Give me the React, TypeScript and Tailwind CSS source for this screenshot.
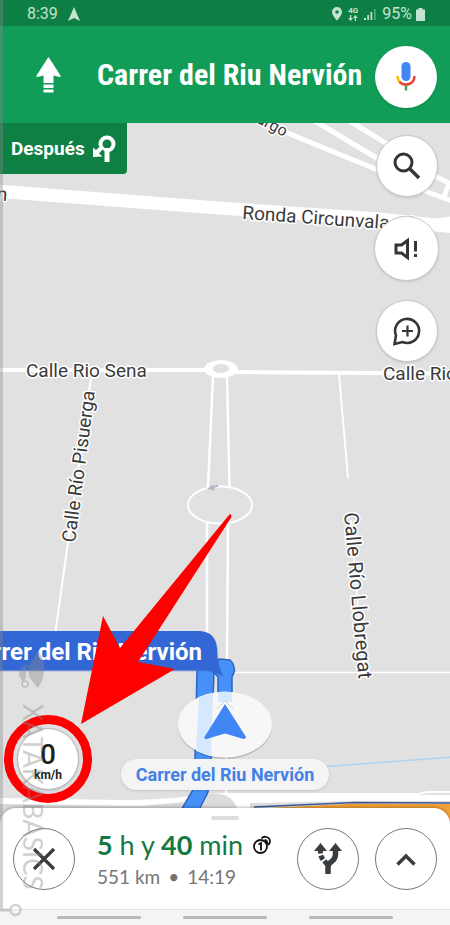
import type { ReactNode } from "react";

const ROBOTO = "font-['Roboto','Liberation_Sans',sans-serif]";
const CONDENSED = "font-['Roboto_Condensed','Liberation_Sans_Narrow','Roboto',sans-serif]";
const ROUND = "font-['Lato','Roboto',sans-serif]";

function StatusBar() {
  return (
    <div className="flex h-[26px] items-center justify-between bg-[#0e7f44] pl-[27px] pr-[25px] text-[#c4e3d1]">
      <div className="flex items-center gap-2.5 pt-0.5">
        <span className="text-[16px] leading-5">8:39</span>
        <svg width="12" height="14" viewBox="0 0 12 14" fill="currentColor" aria-hidden="true">
          <path d="M6 0 12 14 6 11 0 14Z" />
        </svg>
      </div>
      <div className="flex items-center gap-1.5 pt-0.5">
        <svg width="10" height="14" viewBox="0 0 10 14" aria-hidden="true">
          <path fill="currentColor" fillRule="evenodd" d="M5 0a5 5 0 0 1 5 5c0 3.500-5 8.500-5 8.500S0 8.500 0 5a5 5 0 0 1 5-5Zm0 3.200a1.800 1.800 0 1 0 0 3.600 1.800 1.800 0 0 0 0-3.600Z" />
        </svg>
        <div className="flex flex-col items-center">
          <span className="text-[8px] font-bold leading-[8px]">4G</span>
          <svg width="10" height="6" viewBox="0 0 10 6" fill="currentColor" aria-hidden="true">
            <path d="M2 0h1.200v3H5L2.600 6 .2 3H2ZM6.800 6H8V3h1.800L7.400 0 5 3h1.800Z" />
          </svg>
        </div>
        <svg width="12" height="13" viewBox="0 0 12 13" fill="currentColor" aria-hidden="true">
          <path d="M0 10h2v2H0ZM3.300 7h1.700v5H3.300ZM6.500 4h1.700v8H6.500Z" />
          <path opacity=".4" d="M10 1h1.700v11H10Z" />
        </svg>
        <div className="flex items-center gap-1">
          <span className="text-[16px] leading-5">95%</span>
          <svg width="9" height="13" viewBox="0 0 9 13" fill="currentColor" aria-hidden="true">
            <path d="M2.500 0h4v1.500H9V13H0V1.500h2.500Z" />
          </svg>
        </div>
      </div>
    </div>
  );
}

function Header() {
  return (
    <header className="flex h-[97px] items-center bg-[#119d58] pl-9 pr-[13px] text-white">
      <svg className="mr-9 shrink-0" width="25" height="36" viewBox="0 0 25 36" fill="currentColor" aria-hidden="true">
        <path d="M12.500 0 24.500 18.500q.5 1.500-1 1.500l-6-1.500V26h-10v-7.500L1.500 20q-1.500 0-1-1.500ZM7.500 27.500h10V31h-10ZM7.500 32.500h10V35.500h-10Z" />
      </svg>
      <h1 className={`min-w-0 grow whitespace-nowrap text-[30px] font-bold leading-10 ${CONDENSED}`}>Carrer del Riu Nervión</h1>
      <button aria-label="Buscar por voz" className="mt-1 flex size-[62px] shrink-0 items-center justify-center rounded-full bg-white shadow">
        <svg width="20" height="29" viewBox="0 0 20 29" fill="none" aria-hidden="true">
          <rect x="5.500" y="0" width="9" height="19" rx="4.500" fill="#4285f4" />
          <path d="M1.500 14q0 4 2.500 6.500" stroke="#fbbc05" strokeWidth="2.500" />
          <path d="M3.500 19.800Q6 22.500 10 22.500t6.500-2.700Q18.500 17.500 18.500 14" stroke="#ea4335" strokeWidth="2.500" />
          <path d="M10 23.500V28.500" stroke="#34a853" strokeWidth="2.500" />
        </svg>
      </button>
    </header>
  );
}

function MapCanvas() {
  return (
    <svg className="absolute inset-0 size-full" viewBox="0 123 450 701" preserveAspectRatio="xMidYMid slice" aria-label="Mapa">
      <rect x="-400" y="0" width="1300" height="1300" fill="#e1e1e1" />
      <g fill="none" stroke="#fff">
        <path d="M-5 191 225 208.500 380 219 455 227" strokeWidth="13" />
        <path d="M285 132 373 168 430 193 455 202" strokeWidth="5" />
        <path d="M315 121 375 157 425 187" strokeWidth="5" />
        <path d="M350 121 384 142 437 177 455 186" strokeWidth="5" />
        <path d="M449 184Q446 190 444 197" strokeWidth="5" />
        <path d="M436 219q10 1 14 12v-14Z" fill="#fff" />
        <path d="M-5 370H210M232 372 455 373.500" strokeWidth="4" />
        <path d="M213 376 208 487M227 376 229.500 487M207 523V680M228 523 226 800" strokeWidth="2.500" />
        <ellipse cx="220" cy="505" rx="32" ry="18.500" strokeWidth="2" />
        <path d="M339 374 348 478M91 378 55 635" strokeWidth="2" />
        <path d="M226 672.500H455M351 520 363 672" strokeWidth="1.500" />
      </g>
      <ellipse cx="221" cy="369" rx="17" ry="9" fill="#fff" />
      <ellipse cx="221" cy="368.500" rx="8" ry="4.500" fill="#e1e1e1" />
      <path d="M207 489 212 484.500 213 486 218 484.500 218.500 486.500 214 488 214.500 490.500Z" fill="#b4b9c8" />
      <path d="M326 766.500 455 757" stroke="#abd3f3" strokeWidth="1.500" />

      <path d="M-5 798 120 800Q175 800 210 793H455V830H-5Z" fill="#fff" />
      <path d="M-5 804 140 806 186 802V830H-5Z" fill="#d8d8d8" />
      <path d="M204 794Q230 790 237 808H195Z" fill="#dcdcdc" />
      <path d="M250 803 355 801 455 801V812H250Z" fill="#dedede" />
      <path d="M270 808 355 803.500 455 804V830H270Z" fill="#f0a135" />
      <path d="M254 807 355 802.500 455 803" fill="none" stroke="#3c5a99" strokeWidth="1.500" />
      <path d="M416 796q4-4 16-4h30v4Z" fill="#e1e1e1" stroke="#fff" strokeWidth="2" />

      <g fill="#4790f7" stroke="#2b63c6" strokeWidth="1.500">
        <path d="M197 671 201 660H209L214 671 211 758 208 792 198 812H180L194 788 195 758Z" />
        <path d="M214 662 220 659 230 660Q234 663 234.500 671L232 677V712H218V677L213 671Z" />
      </g>

      <g className={ROBOTO} fontSize="19" fill="#3b3b3b" stroke="#fff" strokeWidth="3" strokeLinejoin="round" paintOrder="stroke">
        <text x="26" y="377">Calle Rio Sena</text>
        <text x="383" y="380">Calle Rio Sena</text>
        <text transform="translate(242 219) rotate(4)">Ronda Circunvalación</text>
        <text transform="translate(7 201) rotate(4)" textAnchor="end">n</text>
        <text transform="translate(284 137) rotate(28)" textAnchor="end" fontSize="16">Burgo</text>
        <text transform="translate(75 543) rotate(-82.500)">Calle Río Pisuerga</text>
        <text transform="translate(344 513) rotate(85)" fontSize="20">Calle Río Llobregat</text>
      </g>

      <path d="M-400 632H198Q216 632 218 650 218 666 224 677 212 671.500 206 671.500H-400Z" fill="#2f5bbd" opacity=".3" />
      <path d="M-400 631H198Q216 631 217 649 217 665 223 676 212 670.500 206 670.500H-400Z" fill="#3367d6" />
      <text className={ROBOTO} x="202" y="660" textAnchor="end" fontSize="24" fontWeight="700" fill="#fff">Carrer del Riu Nervión</text>

      <ellipse cx="225" cy="726" rx="47" ry="33" fill="#000" opacity=".18" />
      <ellipse cx="225" cy="724.500" rx="47" ry="33" fill="#f7f7f7" />
      <path d="M199 697 213 693.500 211 756.500 196 751Z" fill="#d6e8fd" />
      <path d="M218 692H232V702H218Z" fill="#d6e8fd" />
      <path d="M217 709 225 701 233 709" fill="#fff" stroke="#c5cbe0" />
      <path d="M225 704 246 737Q246 739 243.500 739L225 733.500 206.500 739Q204 739 204.500 737Z" fill="#4285f4" />
    </svg>
  );
}

function MapButton({ label, size, children }: { label: string; size: string; children: ReactNode }) {
  return (
    <button aria-label={label} className={`flex items-center justify-center rounded-full border border-[#c9c9c9] bg-white text-[#333638] shadow ${size}`}>
      {children}
    </button>
  );
}

function MapArea() {
  return (
    <main className="relative flex grow flex-col justify-between overflow-hidden">
      <MapCanvas />
      <div className="relative flex items-start justify-between pr-[11px]">
        <div className="flex h-[51px] items-center gap-2 rounded-br-sm bg-[#0e8043] pl-[11px] pr-[11px] text-white">
          <span className="text-[19px] font-bold leading-6">Después</span>
          <svg width="23" height="28" viewBox="0 0 23 28" fill="none" aria-hidden="true">
            <circle cx="14" cy="9" r="6.500" stroke="#fff" strokeWidth="4" />
            <path d="M14 13V27" stroke="#fff" strokeWidth="5" />
            <path d="M9 14 5 18" stroke="#0e8043" strokeWidth="8" />
            <path d="M0 22V12.500L3 15 7.500 11 10 14 6 18.500 9.500 21.500Z" fill="#fff" />
          </svg>
        </div>
        <div className="flex flex-col items-center gap-[19px] pt-3">
          <MapButton label="Buscar" size="size-[62px]">
            <svg width="28" height="28" viewBox="0 0 28 28" fill="none" stroke="currentColor" aria-hidden="true">
              <circle cx="10.500" cy="10.500" r="8.500" strokeWidth="3" />
              <path d="M16.500 16.500 26 26" strokeWidth="3.500" />
            </svg>
          </MapButton>
          <MapButton label="Sonido: solo alertas" size="size-[65px]">
            <svg width="25" height="24" viewBox="0 0 25 24" fill="none" stroke="currentColor" aria-hidden="true">
              <path d="M2 8H7.500L13.500 3.500V20.500L7.500 16H2Z" strokeWidth="3" />
              <path d="M21.500 4V14.500M21.500 17V20" strokeWidth="3" />
            </svg>
          </MapButton>
          <MapButton label="Añadir un informe" size="size-[62px]">
            <svg width="30" height="30" viewBox="0 0 30 30" fill="none" stroke="currentColor" aria-hidden="true">
              <path d="M4 19.500A12 12 0 1 1 10.500 26L2.500 28Z" strokeWidth="2.600" />
              <path d="M15.500 9.500V20.500M10 15H21" strokeWidth="2.200" />
            </svg>
          </MapButton>
        </div>
      </div>
      <div className="relative mb-[34px] flex items-end px-[17px]">
        <div className="flex size-[62px] flex-col items-center justify-center rounded-full border border-[#b5b5b5] bg-white pt-2 text-[#222] shadow">
          <span className="text-[28px] font-medium leading-6">0</span>
          <span className="text-[12px] font-bold leading-4">km/h</span>
        </div>
      </div>
      <div className="absolute inset-x-0 bottom-[34px] flex justify-center">
        <div className="flex h-[31px] items-center rounded-full bg-[#f4f4f4] px-[15px] text-[18px] font-bold text-[#4481e6] shadow">
          Carrer del Riu Nervión
        </div>
      </div>
    </main>
  );
}

function SheetButton({ label, children }: { label: string; children: ReactNode }) {
  return (
    <button aria-label={label} className="flex size-[62px] shrink-0 items-center justify-center rounded-full border border-[#777] bg-white text-[#3a3d40]">
      {children}
    </button>
  );
}

function TripSheet() {
  return (
    <section className="relative -mt-4 flex h-[101px] flex-col items-center rounded-t-2xl bg-white px-[13px] pt-2 shadow-[0_-1px_3px_rgba(0,0,0,0.25)]">
      <div className="h-1 w-7 rounded-full bg-[#dcdfe2]" />
      <div className="flex w-full items-center gap-4 pt-[7px]">
        <SheetButton label="Cerrar">
          <svg width="24" height="24" viewBox="0 0 24 24" stroke="currentColor" strokeWidth="3.200" aria-hidden="true">
            <path d="M2 2 22 22M22 2 2 22" />
          </svg>
        </SheetButton>
        <div className={`flex grow flex-col gap-0.5 pl-[6px] pt-0.5 ${ROUND}`}>
          <div className="flex items-center gap-2.5 whitespace-nowrap text-[27px] leading-8 text-[#137a43]">
            <span>
              <b>5</b> h y <b>40</b> min
            </span>
            <svg width="19" height="20" viewBox="0 0 19 20" fill="none" stroke="#111" strokeWidth="1.800" aria-label="Peajes">
              <circle cx="7.500" cy="11.500" r="6.500" />
              <path d="M5.500 9.500 8 8V15.500" />
              <path d="M8.500 3.500Q10.500 1 13.500 2 17 3 17 6.500 17 9 15 10M11.500 5Q14.500 5.500 14.500 9" />
            </svg>
          </div>
          <div className="flex gap-2 whitespace-nowrap text-[19px] leading-7 text-[#757575]">
            <span>551 km</span>
            <span>•</span>
            <span>14:19</span>
          </div>
        </div>
        <SheetButton label="Rutas alternativas">
          <svg width="28" height="32" viewBox="0 0 28 32" fill="none" aria-hidden="true">
            <path d="M14 31V24Q14 21 17 19 21.500 16 21.500 11V7" stroke="currentColor" strokeWidth="5.500" />
            <path d="M21.500 0 28 8H15Z" fill="currentColor" />
            <path d="M6.500 0 13 8H0Z" fill="currentColor" />
            <path d="M6.500 7Q6 12 8 15T14 22" stroke="currentColor" strokeWidth="5" strokeDasharray="3.500 2 5 2 10" />
          </svg>
        </SheetButton>
        <SheetButton label="Más opciones">
          <svg width="20" height="13" viewBox="0 0 20 13" fill="none" stroke="currentColor" strokeWidth="3.500" aria-hidden="true">
            <path d="M1.500 11.500 10 3 18.500 11.500" />
          </svg>
        </SheetButton>
      </div>
    </section>
  );
}

function Annotations() {
  return (
    <svg className="pointer-events-none absolute inset-0 size-full" viewBox="0 0 450 925" preserveAspectRatio="xMidYMid slice" aria-hidden="true">
      <circle cx="48" cy="759" r="39.500" fill="none" stroke="#fe0000" strokeWidth="9" />
      <path d="M81 724 103 616 120 648 229 515Q231.500 513 231.500 517L138 662 175 669Z" fill="#fe0000" />
      <g fill="none" stroke="#8a8a8a" opacity=".38">
        <path d="M1.500 0V910H10" strokeWidth="3" />
        <circle cx="15.500" cy="910" r="5" strokeWidth="2.500" />
      </g>
      <g fill="#8a8a8a" opacity=".4">
        <path d="M38 651Q46 661 44 671 43 681 38 688L29 677 28 667Z" />
        <path d="M27 663Q19 668 19 676L23 682 26 678V670Z" />
        <circle cx="25" cy="684" r="3" fill="none" stroke="#8a8a8a" strokeWidth="1.500" />
        <text className={ROUND} transform="translate(23 704) rotate(90)" fontSize="26">XATAKABASICS</text>
      </g>
    </svg>
  );
}

export default function App() {
  return (
    <div className={`relative flex min-h-screen flex-col overflow-hidden bg-white ${ROBOTO}`}>
      <StatusBar />
      <Header />
      <MapArea />
      <TripSheet />
      <div className="relative flex h-4 items-center justify-center gap-[42px] border-t border-[#e4e4e4] bg-[#f4f4f4]">
        <div className="h-[3px] w-[84px] rounded-full bg-[#b8b8b8]" />
        <div className="h-[3px] w-[84px] rounded-full bg-[#b8b8b8]" />
        <div className="h-[3px] w-[84px] rounded-full bg-[#b8b8b8]" />
      </div>
      <Annotations />
    </div>
  );
}
